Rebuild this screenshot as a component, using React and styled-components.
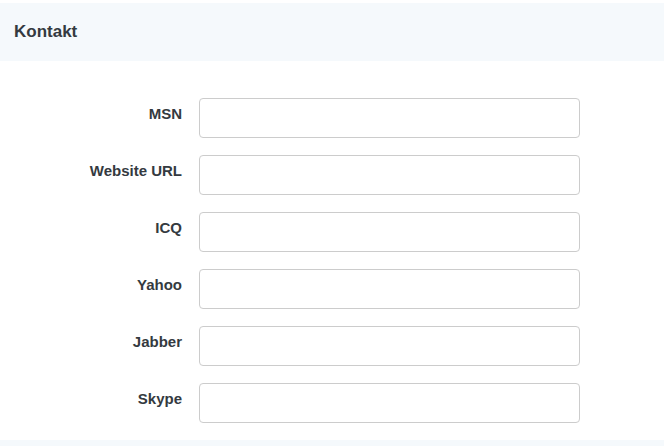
import styled, { createGlobalStyle } from "styled-components";

const GlobalStyle = createGlobalStyle`
  * { margin: 0; padding: 0; box-sizing: border-box; }
  body {
    background: #ffffff;
    font-family: "Liberation Sans", Arial, sans-serif;
    color: #343a40;
  }
`;

const Panel = styled.section`
  width: 664px;
  padding-top: 3px;
`;

const Heading = styled.header`
  height: 58px;
  background: #f5f9fc;
  display: flex;
  align-items: center;
  padding-left: 14px;

  h2 {
    font-size: 17px;
    font-weight: bold;
    color: #343a40;
  }
`;

const Form = styled.form`
  display: flex;
  flex-direction: column;
  gap: 17px;
  padding: 37px 0 17px;
`;

const Row = styled.div`
  display: grid;
  grid-template-columns: 182px 381px;
  column-gap: 17px;
  align-items: start;
`;

const Label = styled.label`
  text-align: right;
  font-size: 15px;
  font-weight: bold;
  color: #343a40;
  padding-top: 7px;
`;

const Input = styled.input`
  height: 40px;
  width: 100%;
  border: 1px solid #cccccc;
  border-radius: 4px;
  background: #ffffff;
  padding: 0 10px;
  font-size: 14px;
  font-family: inherit;
  outline: none;
`;

const Footer = styled.div`
  height: 6px;
  background: #f5f9fc;
`;

const fields = ["MSN", "Website URL", "ICQ", "Yahoo", "Jabber", "Skype"];

function App() {
  return (
    <Panel>
      <GlobalStyle />
      <Heading>
        <h2>Kontakt</h2>
      </Heading>
      <Form>
        {fields.map((f) => (
          <Row key={f}>
            <Label>{f}</Label>
            <Input type="text" />
          </Row>
        ))}
      </Form>
      <Footer />
    </Panel>
  );
}

export default App;
